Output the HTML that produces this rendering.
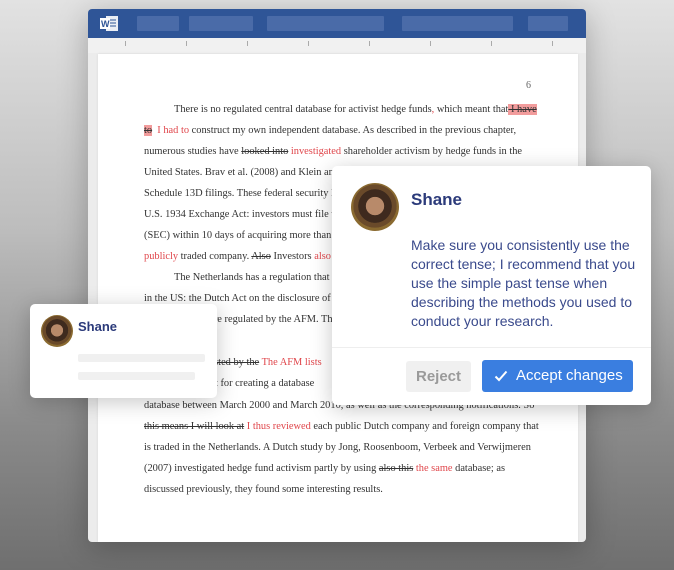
<!DOCTYPE html>
<html><head><meta charset="utf-8"><style>
*{margin:0;padding:0;box-sizing:border-box}
body{width:674px;height:570px;overflow:hidden;position:relative;background:linear-gradient(180deg,#e2e2e2 0%,#bdbdbd 40%,#8a8a8a 75%,#6f6f6f 100%);font-family:"Liberation Sans",sans-serif}
.win{position:absolute;left:88px;top:9px;width:498px;height:533px;background:#ececec;border-radius:4px;box-shadow:0 6px 30px rgba(0,0,0,.25);overflow:hidden}
.hdr{position:absolute;left:0;top:0;width:498px;height:29px;background:#2f5597}
.blk{position:absolute;top:7px;height:15px;background:#4a6ba8;border-radius:1px}
.ruler{position:absolute;top:29px;left:0;width:498px;height:15px;background:#f1f1f1}
.tick{position:absolute;top:3px;width:1px;height:5px;background:#aaa}
.page{position:absolute;left:10px;top:45px;width:480px;height:488px;background:#fff;box-shadow:0 0 3px rgba(0,0,0,.08)}
.ln{position:absolute;left:144px;font-family:"Liberation Serif",serif;font-size:10.4px;color:#333;white-space:nowrap;margin-top:3px}
.r{color:#e0474c}
.s{text-decoration:line-through}
.hl{background:#f29c9c}
.card{position:absolute;background:#fff;border-radius:5px;box-shadow:0 4px 22px rgba(0,0,0,.22)}
.av{position:absolute;border-radius:50%;background:radial-gradient(circle at 50% 48%,#b88a6a 0 26%,#3e2a1e 27% 48%,#6a4a2a 49% 62%,#8a6a30 63%);overflow:hidden}
.name{position:absolute;color:#2b3a7a;font-weight:bold}
</style></head><body>
<div class="win">
 <div class="hdr">
  <svg style="position:absolute;left:11px;top:5px" width="20" height="19" viewBox="0 0 20 19"><rect x="7" y="2" width="12" height="15" fill="#fff" opacity=".9"/><g stroke="#2f5597" stroke-width="1"><line x1="11" y1="6" x2="17" y2="6"/><line x1="11" y1="9" x2="17" y2="9"/><line x1="11" y1="12" x2="17" y2="12"/></g><rect x="1" y="4" width="10" height="11" fill="#fff"/><text x="2" y="13" font-family="Liberation Sans" font-weight="bold" font-size="9" fill="#2f5597">W</text></svg>
  <div class="blk" style="left:49px;width:42px"></div>
  <div class="blk" style="left:101px;width:64px"></div>
  <div class="blk" style="left:179px;width:117px"></div>
  <div class="blk" style="left:314px;width:111px"></div>
  <div class="blk" style="left:440px;width:40px"></div>
 </div>
 <div class="ruler">
  <div class="tick" style="left:37px"></div><div class="tick" style="left:98px"></div><div class="tick" style="left:159px"></div><div class="tick" style="left:220px"></div><div class="tick" style="left:281px"></div><div class="tick" style="left:342px"></div><div class="tick" style="left:403px"></div><div class="tick" style="left:464px"></div>
 </div>
 <div class="page"></div>
</div>
<div style="position:absolute;left:526px;top:80px;font-family:'Liberation Serif',serif;font-size:10px;color:#666">6</div>
<div class="ln" style="top:101px;left:174px">There is no regulated central database for activist hedge funds<span class="r">,</span> which meant that<span class="s hl">&nbsp;I have</span></div>
<div class="ln" style="top:122px"><span class="s hl">to</span>&nbsp; <span class="r">I had to</span> construct my own independent database. As described in the previous chapter,</div>
<div class="ln" style="top:143px">numerous studies have <span class="s">looked into</span> <span class="r">investigated</span> shareholder activism by hedge funds in the</div>
<div class="ln" style="top:164px">United States. Brav et al. (2008) and Klein and Zur (2009) both based their research on</div>
<div class="ln" style="top:185px">Schedule 13D filings. These federal security law filings are mandated by section 13(d) of the</div>
<div class="ln" style="top:206px">U.S. 1934 Exchange Act: investors must file with the Securities and Exchange Commission</div>
<div class="ln" style="top:227px">(SEC) within 10 days of acquiring more than 5% of any class of securities of a</div>
<div class="ln" style="top:248px"><span class="r">publicly</span> traded company. <span class="s">Also</span> Investors <span class="r">also</span> have to file</div>
<div class="ln" style="top:269px;left:174px">The Netherlands has a regulation that is comparable to the one</div>
<div class="ln" style="top:290px">in the US: the Dutch Act on the disclosure of voting control</div>
<div class="ln" style="top:311px">companies that are regulated by the AFM. Th</div>
<div class="ln" style="top:354px">This <span class="s">register is listed by the</span> <span class="r">The AFM lists</span></div>
<div class="ln" style="top:375px">The starting point for creating a database</div>
<div class="ln" style="top:397px">database between March 2000 and March 2010, as well as the corresponding notifications. So</div>
<div class="ln" style="top:418px"><span class="s">this means I will look at</span> <span class="r">I thus reviewed</span> each public Dutch company and foreign company that</div>
<div class="ln" style="top:439px">is traded in the Netherlands. A Dutch study by Jong, Roosenboom, Verbeek and Verwijmeren</div>
<div class="ln" style="top:460px">(2007) investigated hedge fund activism partly by using <span class="s">also this</span> <span class="r">the same</span> database; as</div>
<div class="ln" style="top:481px">discussed previously, they found some interesting results.</div>

<div class="card" style="left:30px;top:304px;width:187px;height:94px">
 <div class="av" style="left:11px;top:11px;width:32px;height:32px"></div>
 <div class="name" style="left:48px;top:15px;font-size:13px">Shane</div>
 <div style="position:absolute;left:48px;top:50px;width:127px;height:8px;background:#f0f0f0;border-radius:2px"></div>
 <div style="position:absolute;left:48px;top:68px;width:117px;height:8px;background:#f0f0f0;border-radius:2px"></div>
</div>

<div class="card" style="left:332px;top:166px;width:319px;height:239px">
 <div class="av" style="left:19px;top:17px;width:48px;height:48px"></div>
 <div class="name" style="left:79px;top:24px;font-size:17px">Shane</div>
 <div style="position:absolute;left:79px;top:70px;width:232px;font-size:14px;line-height:19px;color:#3a4a8c">Make sure you consistently use the correct tense; I recommend that you use the simple past tense when describing the methods you used to conduct your research.</div>
 <div style="position:absolute;left:0;top:181px;width:319px;height:1px;background:#eee"></div>
 <div style="position:absolute;left:74px;top:195px;width:65px;height:31px;background:#f0f0f0;border-radius:3px;color:#9a9a9a;font-size:15px;font-weight:bold;text-align:center;line-height:31px">Reject</div>
 <div style="position:absolute;left:150px;top:194px;width:151px;height:32px;background:#3a7ee0;border-radius:3px;color:#fff;font-size:15px;line-height:32px">
  <svg style="position:absolute;left:12px;top:10px" width="14" height="12" viewBox="0 0 14 12"><path d="M1.5 6.5 L5 10 L12.5 1.5" stroke="#fff" stroke-width="2" fill="none"/></svg>
  <span style="position:absolute;left:34px">Accept changes</span>
 </div>
</div>
</body></html>
